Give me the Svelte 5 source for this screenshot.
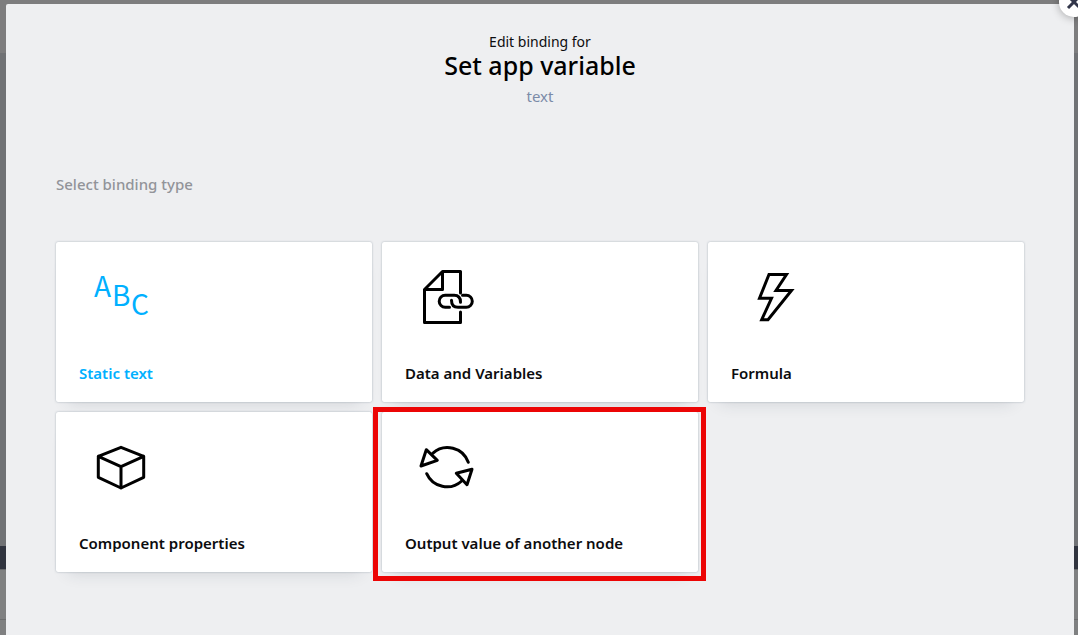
<script>
  const options = [
    { id: 'static', label: 'Static text', active: true },
    { id: 'data', label: 'Data and Variables' },
    { id: 'formula', label: 'Formula' },
    { id: 'component', label: 'Component properties' },
    { id: 'output', label: 'Output value of another node', highlighted: true }
  ];
</script>

<div class="app">
  <div class="backdrop" aria-hidden="true">
    <div class="bar"></div>
    <div class="canvas"></div>
    <div class="strip"></div>
    <div class="panel"></div>
    <div class="footer"></div>
  </div>

  <main class="dialog">
    <button class="close" aria-label="Close">
      <svg viewBox="0 0 16 16" width="16" height="16"><path d="M2 2l12 12M14 2L2 14" /></svg>
    </button>
    <header>
      <p class="kicker">Edit binding for</p>
      <h1>Set app variable</h1>
      <p class="type">text</p>
    </header>

    <h2>Select binding type</h2>

    <div class="grid">
      {#each options as option (option.id)}
        <button class="card" class:active={option.active} class:highlighted={option.highlighted}>
          <svg class="icon" viewBox="0 0 64 64" width="64" height="64" aria-hidden="true">
            {#if option.id === 'static'}
              <text x="5" y="32">A</text>
              <text x="23" y="41">B</text>
              <text x="42" y="50">C</text>
            {:else if option.id === 'data'}
              <path d="M45.5 28V6.5h-18L9.500 24.500v33h36V47M27.500 6.500v18h-18" />
              <path d="M34.500 42.300h-4.300a6 6 0 0 1 0-12h9c4 0 6.300 2.700 6.300 7" />
              <path d="M36.500 35.300c0 4.500 2.500 7 6.500 7h8.300a6 6 0 0 0 0-12H47.500" />
            {:else if option.id === 'formula'}
              <path class="sharp" d="M28 9.500h17.500l-10.500 16h15.500L27 54.700h-6.300l9.800-21.400h-12z" />
            {:else if option.id === 'component'}
              <path d="M32 12.300l22.700 9v21L32 53 9.300 42.300v-21zM9.300 21.300L32 31.700l22.700-10.400M32 31.700V53" />
            {:else}
              <path d="M17.700 18.300A22 22 0 0 1 53.300 27.300M11.700 38.700A22 22 0 0 0 46.700 46" />
              <path d="M11.300 14.700l11 10.600L6 31zM57 34.300l-15.700 4L52 49.700z" />
            {/if}
          </svg>
          <span>{option.label}</span>
        </button>
      {/each}
    </div>
  </main>
</div>

<style>
  :global(body) {
    margin: 0;
  }
  .app {
    position: relative;
    display: flex;
    min-height: 100vh;
    box-sizing: border-box;
    padding: 4px 4px 0 6px;
    font-family: 'Noto Sans', sans-serif;
    color: #0c0c0e;
  }
  .backdrop {
    position: absolute;
    inset: 0;
    display: flex;
    flex-direction: column;
    background: #7f8081;
  }
  .bar {
    height: 53px;
    background: #7d7d7e;
  }
  .canvas {
    flex: 1;
    background: #707275;
  }
  .strip {
    height: 23px;
    background: #30343f;
  }
  .panel {
    height: 49px;
    border-top: 1px solid #66686b;
    border-bottom: 1px solid #6c6d6e;
  }
  .footer {
    height: 15px;
  }
  .dialog {
    position: relative;
    flex: 1;
    box-sizing: border-box;
    padding: 28px 50px;
    background: #eeeff1;
    border-radius: 2px 0 0 0;
  }
  .close {
    position: absolute;
    top: -17px;
    right: -15px;
    display: grid;
    place-items: center;
    width: 30px;
    height: 30px;
    padding: 0;
    border: 0;
    border-radius: 50%;
    background: #fff;
    box-shadow: 0 1px 8px rgb(0 0 0 / 30%);
  }
  .close svg {
    fill: none;
    stroke: #32364a;
    stroke-width: 3;
  }
  header {
    text-align: center;
  }
  p,
  h1,
  h2 {
    margin: 0;
  }
  .kicker {
    font-size: 14px;
    line-height: 20px;
  }
  h1 {
    font-size: 25px;
    font-weight: 500;
    line-height: 26px;
    color: #000;
  }
  .type {
    padding-top: 8px;
    font-size: 15px;
    line-height: 20px;
    color: #7b8ba8;
  }
  h2 {
    padding: 68px 0 48px;
    font-size: 15px;
    font-weight: 500;
    line-height: 20px;
    color: #929499;
  }
  .grid {
    display: grid;
    grid-template-columns: repeat(3, 1fr);
    gap: 10px;
  }
  .card {
    position: relative;
    display: flex;
    flex-direction: column;
    justify-content: space-between;
    align-items: flex-start;
    min-height: 160px;
    padding: 23px 23px 19px;
    border: 0;
    border-radius: 2px;
    background: #fff;
    box-shadow:
      0 0 2px rgb(80 100 120 / 50%),
      0 12px 16px -12px rgb(40 50 70 / 16%);
    font: 600 15px/20px 'Noto Sans', sans-serif;
    color: #0c0c0e;
    text-align: left;
  }
  .active {
    color: #00b0ff;
  }
  .highlighted::after {
    content: '';
    position: absolute;
    inset: -5px -8px -9px -9px;
    border: 5px solid #ec0505;
  }
  .icon {
    overflow: visible;
    margin-left: 10px;
    fill: none;
    stroke: #000;
    stroke-width: 3;
    stroke-linecap: round;
    stroke-linejoin: round;
  }
  .icon text {
    fill: #00b0ff;
    stroke: none;
    font: 400 28px 'Noto Sans CJK JP', sans-serif;
  }
  .icon .sharp {
    stroke-linejoin: miter;
  }
</style>
